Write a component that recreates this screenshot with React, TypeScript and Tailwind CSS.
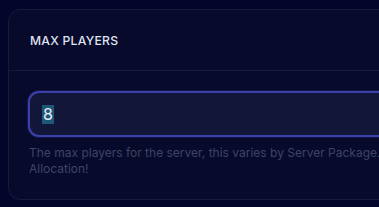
export default function App() {
  return (
    <div className="h-[207px] w-[379px] overflow-hidden bg-[#03052a] pt-[9px] pl-[8px]" style={{ fontFamily: 'Inter, "Noto Sans", sans-serif' }}>
      <div className="w-[560px] rounded-[12px] border border-[#161a3c] bg-[#070a2b]">
        {/* header */}
        <div className="flex h-[61px] items-center border-b border-[#161a3c] px-[21px]">
          <h3 className="pt-[2px] text-[12.2px] font-medium tracking-[0.02em] text-[#dfe2f0]">MAX PLAYERS</h3>
        </div>

        {/* body */}
        <div className="px-[19px] pt-[20px] pb-[22px]">
          <div className="flex h-[46px] items-center rounded-[11px] border-2 border-[#3b41a8] bg-[#12173a] px-[12px] shadow-[0_0_0_1px_rgba(59,65,168,0.25)]">
            <span className="bg-[#1d5878] px-[1px] text-[16px] leading-[19px] text-[#e8ecf7]">8</span>
          </div>
          <p className="mt-[8px] whitespace-nowrap pl-[1px] text-[12px] leading-[16px] text-[#3e4467]">
            The max players for the server, this varies by Server Package. If you need more, upgrade your
            <br />
            Allocation!
          </p>
        </div>
      </div>
    </div>
  )
}
